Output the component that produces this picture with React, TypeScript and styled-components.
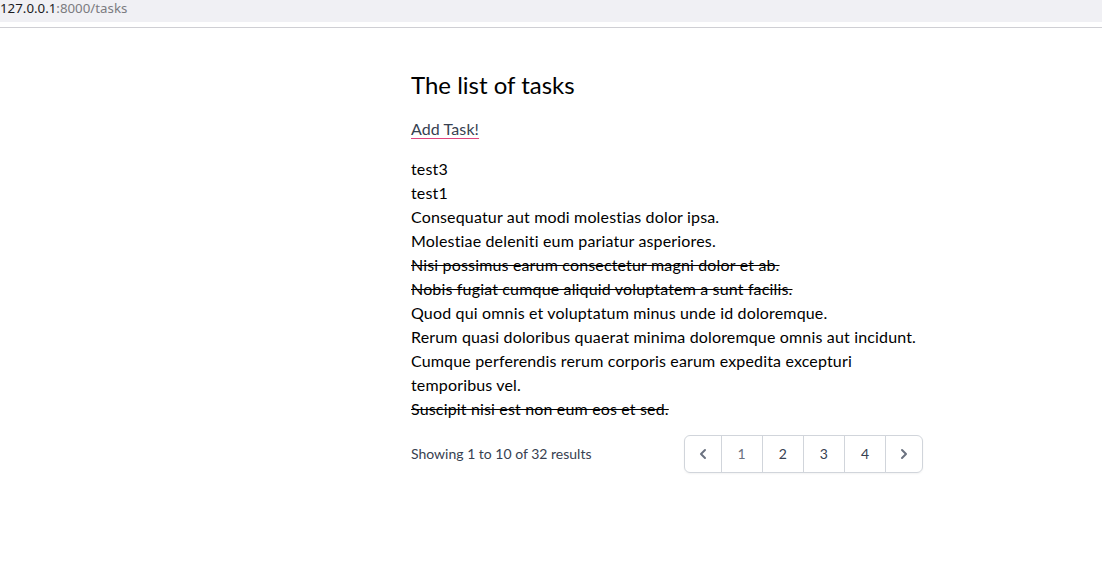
import styled, { createGlobalStyle } from "styled-components";

const GlobalStyle = createGlobalStyle`
  html, body {
    margin: 0;
    padding: 0;
    background: #ffffff;
  }
  body {
    font-family: "Lato", "Noto Sans", sans-serif;
    color: #000000;
  }
`;

const AddressBar = styled.div`
  height: 22px;
  background: #f0f0f4;
  display: flex;
  align-items: flex-start;
  font-family: "Noto Sans", sans-serif;
  font-size: 13.3px;
  line-height: 16px;
  padding-bottom: 5px;
  box-sizing: content-box;
  border-bottom: 1px solid #cfcfd4;
  box-shadow: inset 0 -5px 0 #ffffff;
`;

const Host = styled.span`
  color: #1b1b1f;
`;

const PathPart = styled.span`
  color: #7b7b80;
`;

const Page = styled.div`
  padding: 41px 0 40px 411px;
`;

const Content = styled.main`
  width: 512px;
`;

const Title = styled.h1`
  margin: 0 0 16px;
  font-size: 24px;
  line-height: 32px;
  font-weight: 400;
`;

const AddLink = styled.a`
  display: inline-block;
  margin-bottom: 16px;
  font-size: 16px;
  line-height: 24px;
  color: #374151;
  text-decoration: underline solid #e0457f 1px;
  text-underline-offset: 3px;
  letter-spacing: 0.1px;
`;

const TaskList = styled.ul`
  list-style: none;
  margin: 0 0 14px;
  padding: 0;
`;

const TaskItem = styled.li<{ $done?: boolean }>`
  font-size: 16px;
  line-height: 24px;
  letter-spacing: 0.16px;
  text-decoration: ${({ $done }) => ($done ? "line-through" : "none")};
`;

const PaginationRow = styled.nav`
  display: flex;
  align-items: center;
  justify-content: space-between;
`;

const Summary = styled.p`
  margin: 0;
  font-size: 14px;
  line-height: 20px;
  color: #374151;
`;

const Pager = styled.span`
  display: inline-flex;
  border-radius: 6px;
  box-shadow: 0 1px 2px rgba(0, 0, 0, 0.05);
`;

const PageButton = styled.span<{ $edge?: "left" | "right"; $current?: boolean }>`
  display: inline-flex;
  align-items: center;
  justify-content: center;
  padding: 8px ${({ $edge }) => ($edge ? "8px" : "16px")};
  margin-left: ${({ $edge }) => ($edge === "left" ? "0" : "-1px")};
  font-size: 14px;
  line-height: 20px;
  color: ${({ $current, $edge }) => ($current || $edge ? "#6b7280" : "#374151")};
  background: #ffffff;
  border: 1px solid #d1d5db;
  border-radius: ${({ $edge }) =>
    $edge === "left" ? "6px 0 0 6px" : $edge === "right" ? "0 6px 6px 0" : "0"};
`;

const Chevron = styled.svg`
  width: 20px;
  height: 20px;
  fill: currentColor;
`;

const tasks = [
  { title: "test3", done: false },
  { title: "test1", done: false },
  { title: "Consequatur aut modi molestias dolor ipsa.", done: false },
  { title: "Molestiae deleniti eum pariatur asperiores.", done: false },
  { title: "Nisi possimus earum consectetur magni dolor et ab.", done: true },
  { title: "Nobis fugiat cumque aliquid voluptatem a sunt facilis.", done: true },
  { title: "Quod qui omnis et voluptatum minus unde id doloremque.", done: false },
  { title: "Rerum quasi doloribus quaerat minima doloremque omnis aut incidunt.", done: false },
  { title: "Cumque perferendis rerum corporis earum expedita excepturi temporibus vel.", done: false },
  { title: "Suscipit nisi est non eum eos et sed.", done: true },
];

export default function App() {
  return (
    <>
      <GlobalStyle />
      <AddressBar>
        <Host>127.0.0.1</Host>
        <PathPart>:8000/tasks</PathPart>
      </AddressBar>
      <Page>
        <Content>
          <Title>The list of tasks</Title>
          <AddLink href="#">Add Task!</AddLink>
          <TaskList>
            {tasks.map((task) => (
              <TaskItem key={task.title} $done={task.done}>
                {task.title}
              </TaskItem>
            ))}
          </TaskList>
          <PaginationRow>
            <Summary>Showing 1 to 10 of 32 results</Summary>
            <Pager>
              <PageButton $edge="left">
                <Chevron viewBox="0 0 20 20">
                  <path d="M12.707 5.293a1 1 0 010 1.414L9.414 10l3.293 3.293a1 1 0 01-1.414 1.414l-4-4a1 1 0 010-1.414l4-4a1 1 0 011.414 0z" />
                </Chevron>
              </PageButton>
              <PageButton $current>1</PageButton>
              <PageButton>2</PageButton>
              <PageButton>3</PageButton>
              <PageButton>4</PageButton>
              <PageButton $edge="right">
                <Chevron viewBox="0 0 20 20">
                  <path d="M7.293 14.707a1 1 0 010-1.414L10.586 10 7.293 6.707a1 1 0 011.414-1.414l4 4a1 1 0 010 1.414l-4 4a1 1 0 01-1.414 0z" />
                </Chevron>
              </PageButton>
            </Pager>
          </PaginationRow>
        </Content>
      </Page>
    </>
  );
}
